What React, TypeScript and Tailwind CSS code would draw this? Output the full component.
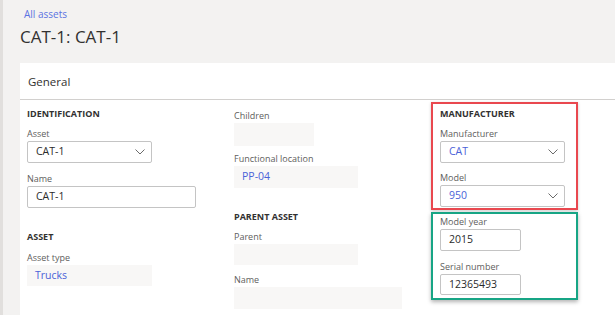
import React from "react"

const font = { fontFamily: '"Open Sans", "Noto Sans", sans-serif' }

function Chevron() {
  return (
    <svg width="10" height="6" viewBox="0 0 10 6" className="shrink-0">
      <polyline points="0.5,0.5 5,5 9.5,0.5" fill="none" stroke="#6b6b6b" strokeWidth="1" />
    </svg>
  )
}

interface FieldProps {
  label: string
  value?: string
  width: string
  kind: "select" | "input" | "readonly"
  link?: boolean
  className?: string
  height?: string
}

function Field({ label, value, width, kind, link, className, height }: FieldProps) {
  const text = link ? "text-[#4a62d8]" : "text-[#2b2b2b]"
  const box =
    kind === "readonly"
      ? "bg-[#f8f7f6]"
      : "bg-white border border-[#c4c4c4] rounded-[2px]"
  return (
    <div className={className}>
      <div className="text-[9px] leading-[12px] text-[#605e5c] mb-px">{label}</div>
      <div
        className={`${width} ${height ?? "h-[22px]"} ${box} flex items-center justify-between pl-[8px] pr-[6px]`}
      >
        <span className={`text-[10.5px] ${text}`}>{value}</span>
        {kind === "select" && <Chevron />}
      </div>
    </div>
  )
}

function Heading({ children, className }: { children: React.ReactNode; className?: string }) {
  return (
    <div className={`text-[9px] leading-[12px] font-bold text-[#323130] ${className ?? ""}`}>{children}</div>
  )
}

export default function App() {
  return (
    <div
      style={font}
      className="w-[615px] h-[315px] overflow-hidden bg-[#f3f2f1] border-l-[3px] border-[#e1dfdd] flex flex-col"
    >
      <div className="pl-[21px] pt-[7px] text-[10px] leading-[14px] text-[#5b73e2]">All assets</div>
      <div className="pl-[17px] pt-[4px] text-[17px] leading-[24px] text-[#323130]">CAT-1: CAT-1</div>

      <div className="ml-[17px] mt-[14px] flex-1 bg-white flex flex-col">
        <div className="h-[37px] border-b border-[#d2d0ce] flex items-center pl-[8px] pt-[2px]">
          <span className="text-[11.5px] text-[#323130]">General</span>
        </div>

        <div className="flex pl-[7px]">
          {/* column 1 */}
          <div className="w-[207px] pt-[8px]">
            <Heading>IDENTIFICATION</Heading>
            <Field className="mt-[8px]" label="Asset" value="CAT-1" width="w-[125px]" kind="select" />
            <Field className="mt-[10px]" label="Name" value="CAT-1" width="w-[169px]" kind="input" />
            <Heading className="mt-[23px]">ASSET</Heading>
            <Field className="mt-[9px]" label="Asset type" value="Trucks" width="w-[125px]" kind="readonly" link height="h-[21px]" />
          </div>

          {/* column 2 */}
          <div className="w-[197px] pt-[10px]">
            <Field label="Children" width="w-[80px]" kind="readonly" height="h-[23px]" />
            <Field className="mt-[7px]" label="Functional location" value="PP-04" width="w-[124px]" kind="readonly" link />
            <Heading className="mt-[23px]">PARENT ASSET</Heading>
            <Field className="mt-[8px]" label="Parent" width="w-[124px]" kind="readonly" height="h-[21px]" />
            <Field className="mt-[9px]" label="Name" width="w-[168px]" kind="readonly" />
          </div>

          {/* column 3 */}
          <div className="w-[147px] pt-[2px] flex flex-col gap-[2px]">
            <div className="border-2 border-[#e9484f] px-[7px] pt-[4px] pb-px shadow-[0_1px_3px_rgba(0,0,0,0.2)]">
              <Heading>MANUFACTURER</Heading>
              <Field className="mt-[8px]" label="Manufacturer" value="CAT" width="w-[125px]" kind="select" link />
              <Field className="mt-[9px]" label="Model" value="950" width="w-[125px]" kind="select" link />
            </div>
            <div className="border-2 border-[#17a585] px-[7px] pt-[2px] pb-[3px] shadow-[0_2px_4px_rgba(0,0,0,0.3)]">
              <Field label="Model year" value="2015" width="w-[81px]" kind="input" />
              <Field className="mt-[10px]" label="Serial number" value="12365493" width="w-[81px]" kind="input" height="h-[21px]" />
            </div>
          </div>
        </div>
      </div>
    </div>
  )
}
